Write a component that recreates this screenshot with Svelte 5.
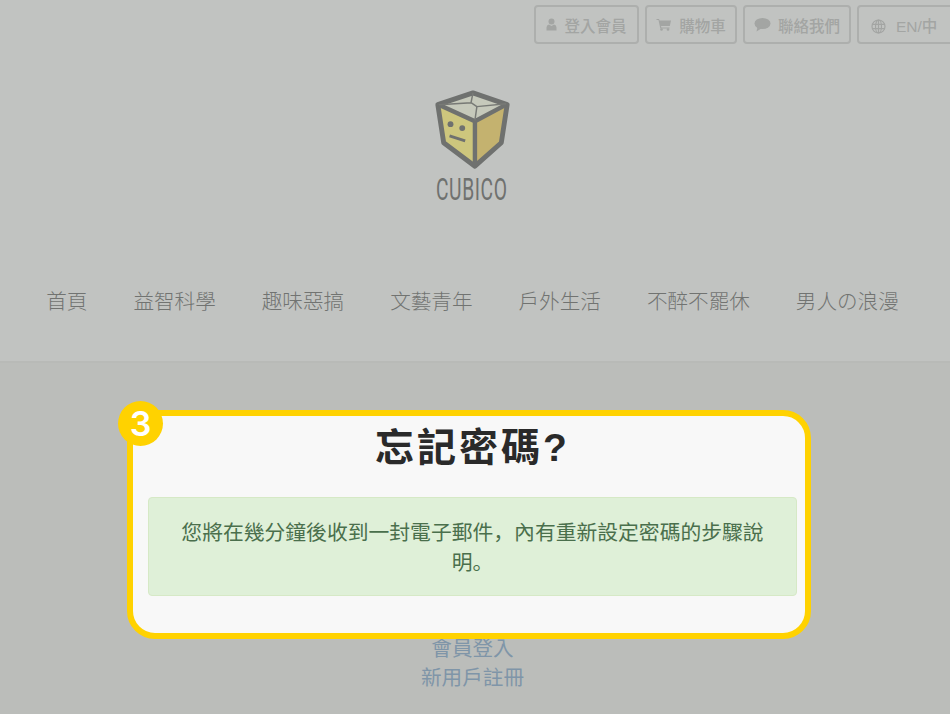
<script>
  const nav = ['首頁', '益智科學', '趣味惡搞', '文藝青年', '戶外生活', '不醉不罷休', '男人の浪漫'];
</script>

<div class="page">
  <header class="head">
    <div class="top">
      <a class="tb b1">
        <svg width="11" height="13" viewBox="0 0 11 13"><circle cx="5.5" cy="3.4" r="3" fill="#a3a5a3"/><path d="M0.5 12.5V9.5Q0.5 7 3 6.6L5.5 8 8 6.6Q10.500 7 10.500 9.500V12.500Z" fill="#a3a5a3"/></svg>
        <span>登入會員</span>
      </a>
      <a class="tb b2">
        <svg width="16" height="13" viewBox="0 0 16 13"><path d="M0.500 1H3L3.600 2.500H15L13.800 8H5L5.400 9.500H13.500V10.500H4.300L2.500 2H0.500Z" fill="#a3a5a3"/><circle cx="5.500" cy="11.500" r="1.300" fill="#a3a5a3"/><circle cx="12" cy="11.500" r="1.300" fill="#a3a5a3"/></svg>
        <span>購物車</span>
      </a>
      <a class="tb b3">
        <svg width="17" height="15" viewBox="0 0 17 15"><ellipse cx="8.500" cy="6.500" rx="8" ry="5.500" fill="#a3a5a3"/><path d="M3.500 10L2.500 14.500 8 11Z" fill="#a3a5a3"/></svg>
        <span>聯絡我們</span>
      </a>
      <a class="tb b4">
        <svg class="globe" width="15" height="15" viewBox="0 0 15 15" fill="none" stroke="#a3a5a3" stroke-width="1.200"><circle cx="7.500" cy="7.500" r="6.500"/><ellipse cx="7.500" cy="7.500" rx="3" ry="6.500"/><path d="M1 5.300H14M1 9.700H14M7.500 1V14"/></svg>
        <span>EN/中</span>
      </a>
    </div>

    <div class="logo">
      <svg width="76" height="86" viewBox="0 0 76 86">
        <path d="M39 3L74 15 68 54 41 78 9 54 3 15Z" fill="#c6c9bb"/>
        <path d="M5 16L41 32 41 78 10 53Z" fill="#cdc67d"/>
        <path d="M41 32L72 16 67 53 41 78Z" fill="#c4b26f"/>
        <path d="M39 3L74 15 68 54 41 78 9 54 3 15Z" fill="none" stroke="#6f716f" stroke-width="5" stroke-linejoin="round"/>
        <path d="M4 15L41 32 73 15M41 32V78" fill="none" stroke="#6f716f" stroke-width="4.500"/>
        <path d="M39 3L37 13 4 15M37 13L43 17 41 31M43 17L73 14" fill="none" stroke="#787a76" stroke-width="1.500"/>
        <circle cx="16" cy="35" r="3" fill="#6f716f"/>
        <circle cx="28" cy="39" r="3" fill="#6f716f"/>
        <path d="M15 47L31 52" stroke="#6f716f" stroke-width="3"/>
      </svg>
      <div class="brand">CUBICO</div>
    </div>

    <nav class="nav">
      {#each nav as item}
        <a>{item}</a>
      {/each}
    </nav>
  </header>

  <main class="main">
    <a class="link">會員登入</a>
    <a class="link">新用戶註冊</a>
  </main>

  <section class="card">
    <span class="badge">3</span>
    <h1>忘記密碼?</h1>
    <div class="alert">您將在幾分鐘後收到一封電子郵件，內有重新設定密碼的步驟說明。</div>
  </section>
</div>

<style>
  :global(body) {
    margin: 0;
    background: #bbbdba;
  }
  .page {
    position: relative;
    width: 950px;
    height: 714px;
    overflow: hidden;
    font-family: "Liberation Sans", "Noto Sans CJK TC", sans-serif;
  }
  .head {
    height: 363px;
    box-sizing: border-box;
    background: #c1c3c1;
    border-bottom: 2px solid #b8bab7;
    padding-top: 5px;
  }
  .top {
    display: flex;
    gap: 6px;
    padding-left: 534px;
    width: 500px;
  }
  .tb {
    display: flex;
    align-items: center;
    justify-content: center;
    gap: 7px;
    box-sizing: border-box;
    height: 39px;
    flex: none;
    border: 2px solid #adafad;
    border-radius: 4px;
    color: #a3a5a3;
    font-size: 15.500px;
    font-weight: 500;
  }
  .b1 { width: 105px; }
  .b2 { width: 92px; }
  .b3 { width: 108px; }
  .b4 { width: 110px; justify-content: flex-start; padding-left: 12px; gap: 10px; }
  .globe { margin-top: 4px; }
  .logo {
    display: flex;
    flex-direction: column;
    align-items: center;
    width: 944px;
    margin-top: 46px;
    height: 117px;
  }
  .brand {
    margin-top: -1px;
    font-family: "Liberation Sans Narrow", "Roboto", sans-serif;
    font-size: 31px;
    line-height: 34px;
    color: #6f716f;
    letter-spacing: 1px;
    transform: scaleX(0.62);
  }
  .nav {
    display: flex;
    justify-content: center;
    gap: 46px;
    margin-top: 81px;
    padding-right: 5px;
    font-size: 20.600px;
    line-height: 28px;
    font-weight: 300;
    color: #717371;
  }
  .main {
    display: flex;
    flex-direction: column;
    align-items: center;
    padding-top: 272px;
    padding-right: 5px;
    font-size: 20.600px;
    line-height: 28.500px;
    color: #7f95a8;
  }
  .card {
    position: absolute;
    left: 127px;
    top: 410px;
    width: 684px;
    height: 229px;
    box-sizing: border-box;
    background: #f8f8f8;
    border: 6px solid #ffd200;
    border-radius: 28px;
    padding: 10px 8px 0 15px;
  }
  .badge {
    position: absolute;
    left: -15px;
    top: -15px;
    width: 45px;
    height: 45px;
    border-radius: 50%;
    background: #ffd200;
    color: #fff;
    font-size: 34px;
    font-weight: 600;
    line-height: 45px;
    text-align: center;
    font-family: "Inter", sans-serif;
  }
  h1 {
    margin: 0;
    text-align: center;
    font-size: 39px;
    line-height: 44px;
    font-weight: 700;
    letter-spacing: 3px;
    color: #2a2a2a;
  }
  .alert {
    margin-top: 27px;
    height: 99px;
    box-sizing: border-box;
    padding: 18px 30px;
    background: #dff0d8;
    border: 1px solid #d6e9c6;
    border-radius: 4px;
    color: #4a6f4c;
    font-family: "Noto Sans CJK SC", sans-serif;
    font-size: 20.800px;
    line-height: 30px;
    text-align: center;
  }
</style>
